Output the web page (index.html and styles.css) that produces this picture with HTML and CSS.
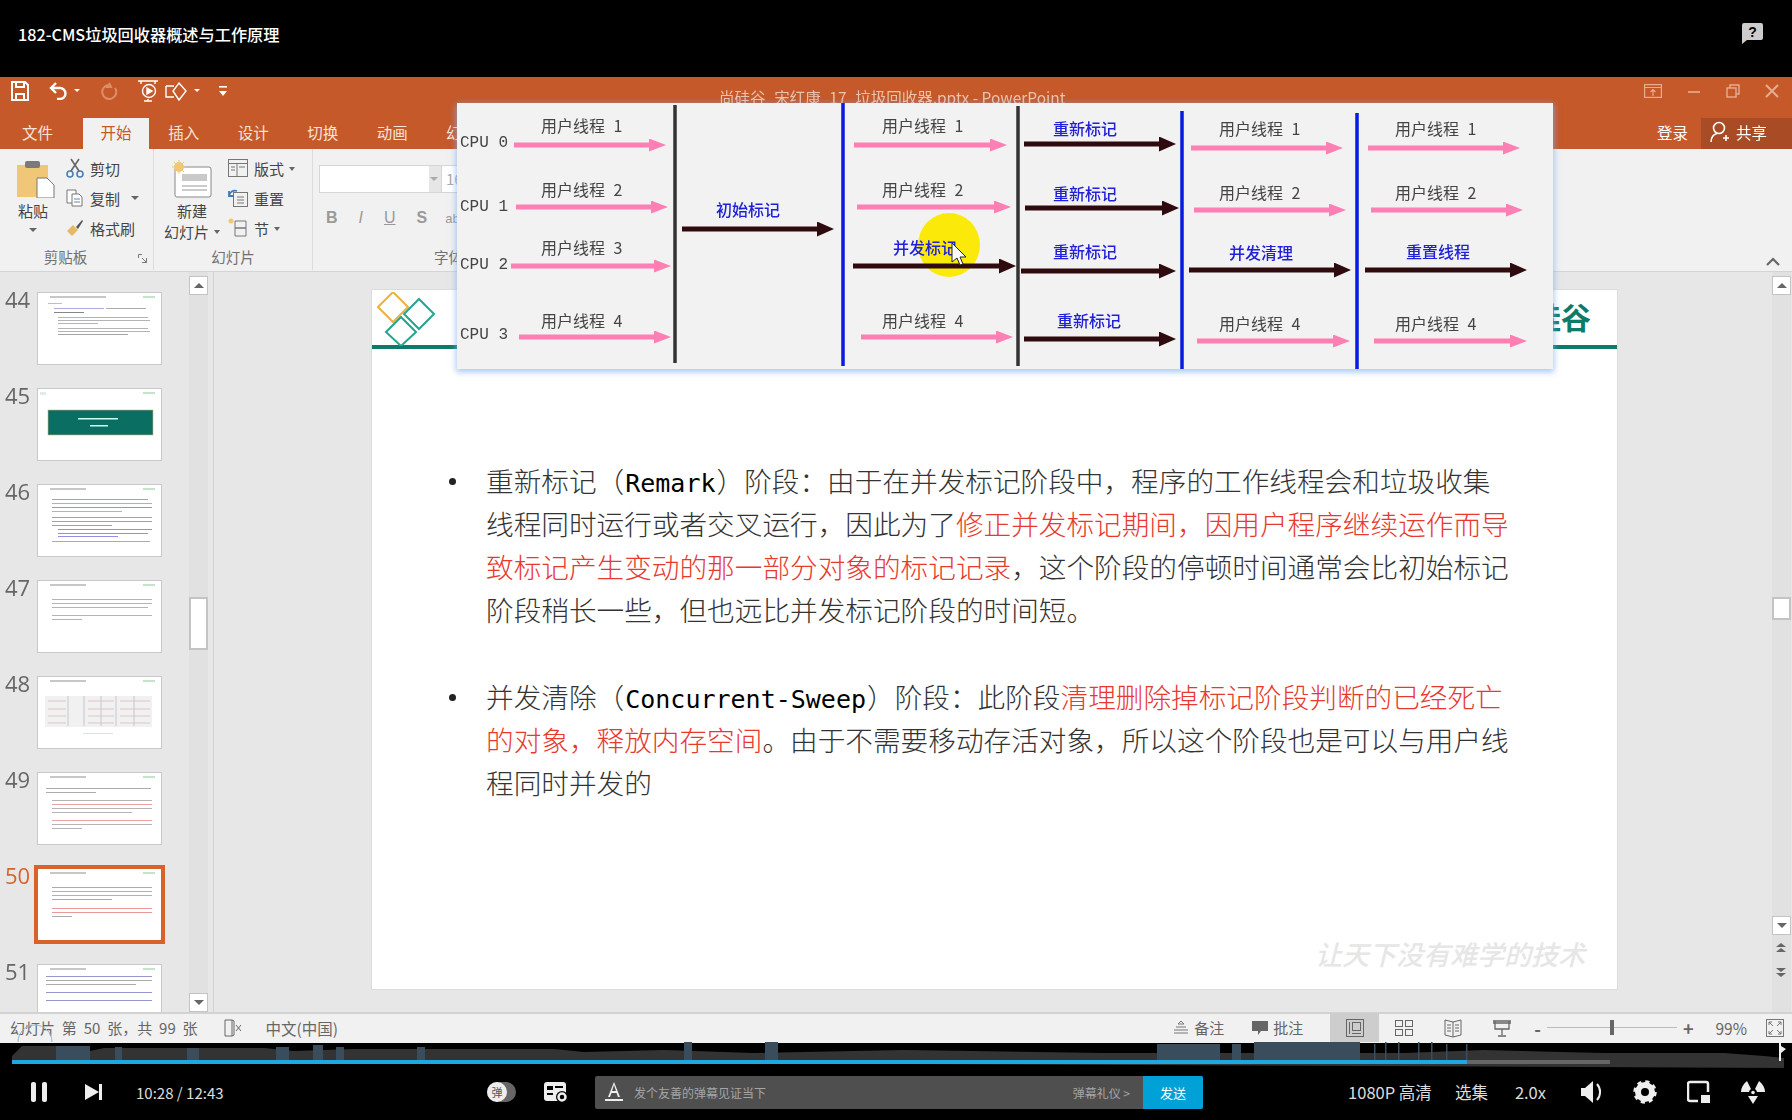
FILE: index.html
```html
<!DOCTYPE html>
<html lang="zh-CN">
<head>
    <meta charset="UTF-8">
    <title>182-CMS垃圾回收器概述与工作原理</title>
    <link rel="stylesheet" href="styles.css">
</head>
<body>
<div class="player">
    <header class="top-bar">
        <h1 class="video-title">182-CMS垃圾回收器概述与工作原理</h1>
        <svg class="help-icon" width="21" height="21" viewBox="0 0 21 21"><path d="M2 0h17a2 2 0 0 1 2 2v13a2 2 0 0 1-2 2H5l-5 4V2a2 2 0 0 1 2-2z" fill="#ccc"/><text x="10.500" y="14" class="help-mark">?</text></svg>
    </header>

    <main class="video">
        <div class="title-bar">
            <div class="quick-tools">
                <svg width="18" height="20" viewBox="0 0 18 20" fill="none" stroke="#fff" stroke-width="2"><path d="M1 1h13l3 3v15H1z"/><path d="M5 1v5h8V1M5 19v-6h8v6"/></svg>
                <svg class="tool-undo" width="20" height="18" viewBox="0 0 20 18" fill="none" stroke="#fff" stroke-width="2.400"><path d="M7 1L2 6l5 5M2 6h9a5 5 0 0 1 0 11H8"/></svg>
                <span class="caret-mini"></span>
                <svg class="tool-redo" width="18" height="18" viewBox="0 0 18 18" fill="none" stroke="#db8f68" stroke-width="2"><path d="M9 3a7 7 0 1 0 6 3M9 1l2 4-5 0"/></svg>
                <svg class="tool-show" width="22" height="24" viewBox="0 0 22 24" fill="none" stroke="#fff" stroke-width="1.400"><path d="M1 2h20M4 2v3M18 2v3M7 22h8M11 20v2"/><circle cx="12" cy="12" r="6.500"/><path d="M10 9l5 3-5 3z" fill="#fff"/></svg>
                <svg width="24" height="22" viewBox="0 0 24 22" fill="none" stroke="#fff" stroke-width="1.400"><path d="M1 6h8M1 6v11h8M14 3l7 8-7 9-6-9z"/></svg>
                <span class="caret-mini"></span>
                <svg class="tool-more" width="10" height="12" viewBox="0 0 10 12" fill="#fff"><rect x="1" y="1" width="8" height="1.600"/><path d="M1 6h8l-4 5z"/></svg>
            </div>
            <div class="doc-name">尚硅谷_宋红康_17_垃圾回收器.pptx - PowerPoint</div>
            <div class="window-btns">
                <svg width="18" height="14" viewBox="0 0 18 14" fill="none" stroke="#e6ad90" stroke-width="1.200"><rect x=".6" y=".6" width="16.800" height="12.800"/><path d="M.6 3.500h16.800M9 12V6M6.500 8L9 5.500 11.500 8"/></svg>
                <svg width="14" height="14" viewBox="0 0 14 14" stroke="#e6ad90" stroke-width="1.600"><path d="M1 8h12"/></svg>
                <svg width="14" height="14" viewBox="0 0 14 14" fill="none" stroke="#e6ad90" stroke-width="1.400"><rect x="1" y="4" width="9" height="9"/><path d="M4 4V1h9v9h-3"/></svg>
                <svg width="14" height="14" viewBox="0 0 14 14" stroke="#e6ad90" stroke-width="2"><path d="M1 1l12 12M13 1L1 13"/></svg>
            </div>
        </div>

        <nav class="tabs">
            <span class="tab tab-file">文件</span>
            <span class="tab tab-active">开始</span>
            <span class="tab">插入</span>
            <span class="tab">设计</span>
            <span class="tab">切换</span>
            <span class="tab">动画</span>
            <span class="tab tab-cut">幻</span>
            <div class="account">
                <span class="login">登录</span>
                <span class="share">
                    <svg width="20" height="22" viewBox="0 0 20 22" fill="none" stroke="#fff" stroke-width="1.600"><circle cx="9" cy="7" r="5.500"/><path d="M1 21c0-5 3-8 6-8.500M13 17h6M16 14v6"/></svg>
                    共享
                </span>
            </div>
        </nav>

        <section class="ribbon">
            <div class="group group-clip">
                <div class="group-body">
                    <div class="big-tool">
                        <svg class="paste-icon" width="38" height="38" viewBox="0 0 38 38"><rect x="0" y="5" width="31" height="32" fill="#efc777"/><rect x="8" y="1" width="15" height="7" rx="2" fill="#7a7a7a"/><path d="M20 18h10l7 7v13H20z" fill="#fff" stroke="#777"/></svg>
                        <span>粘贴</span>
                        <i class="caret"></i>
                    </div>
                    <div class="small-tools">
                        <div class="small-tool">
                            <svg width="18" height="20" viewBox="0 0 18 20" fill="none" stroke="#4a7fb5" stroke-width="1.600"><circle cx="4" cy="16" r="3"/><circle cx="14" cy="16" r="3"/><path d="M5 13L13 1M13 13L5 1" stroke="#666"/></svg>
                            <span>剪切</span>
                        </div>
                        <div class="small-tool">
                            <svg width="18" height="18" viewBox="0 0 18 18" fill="#fff" stroke="#777"><path d="M1 1h9v13H1z"/><path d="M6 5h7l3 3v9H6z"/><path d="M8 10h6M8 13h6" stroke="#5a8bbb"/></svg>
                            <span>复制</span>
                            <i class="caret caret-far"></i>
                        </div>
                        <div class="small-tool">
                            <svg width="18" height="18" viewBox="0 0 18 18"><path d="M1 12l6-6 5 5-6 6z" fill="#e6b968"/><path d="M10 8l6-7 1 1-5 8z" fill="#555"/></svg>
                            <span>格式刷</span>
                        </div>
                    </div>
                </div>
                <div class="group-label label-clip">剪贴板<svg class="launcher" width="9" height="9" viewBox="0 0 9 9" fill="none" stroke="#777"><path d="M.5 4V.5H4M8.500 8.500L4 4M8.500 4v4.500H4"/></svg></div>
            </div>
            <div class="group group-slides">
                <div class="group-body">
                    <div class="big-tool big-new">
                        <svg width="40" height="38" viewBox="0 0 40 38"><rect x="3" y="7" width="36" height="30" rx="2" fill="#fff" stroke="#888"/><rect x="10" y="14" width="25" height="7" fill="#c9c9c9"/><path d="M10 26h25M10 30h25" stroke="#999"/><circle cx="7" cy="7" r="5" fill="#efc777"/><path d="M7 0v14M0 7h14M2 2l10 10M12 2L2 12" stroke="#efc777"/></svg>
                        <span>新建</span>
                        <span>幻灯片<i class="caret caret-inline"></i></span>
                    </div>
                    <div class="small-tools">
                        <div class="small-tool">
                            <svg width="20" height="20" viewBox="0 0 20 20" fill="none" stroke="#777"><rect x=".5" y="1.500" width="19" height="17"/><path d="M.5 5.500h19M9 5.500v13M3 9h4M3 12h4M11 9h6"/></svg>
                            <span>版式<i class="caret caret-inline"></i></span>
                        </div>
                        <div class="small-tool">
                            <svg width="20" height="20" viewBox="0 0 20 20" fill="none" stroke="#777"><rect x="5.500" y="4.500" width="14" height="14"/><path d="M9 9h7M9 12h7M9 15h7"/><path d="M1 8a6 6 0 0 1 8-5M1 3v5h5" stroke="#3f7cb8" stroke-width="1.800"/></svg>
                            <span>重置</span>
                        </div>
                        <div class="small-tool">
                            <svg width="20" height="20" viewBox="0 0 20 20" fill="none" stroke="#777"><path d="M7 3h11v7H7zM7 10h11v8H7z"/><circle cx="3" cy="3" r="2.500" fill="#efc777" stroke="none"/></svg>
                            <span>节<i class="caret caret-inline"></i></span>
                        </div>
                    </div>
                </div>
                <div class="group-label">幻灯片</div>
            </div>
            <div class="group group-font">
                <div class="group-body font-body">
                    <div class="font-boxes">
                        <div class="font-name"><i class="caret caret-dim"></i></div>
                        <div class="font-size">16</div>
                    </div>
                    <div class="font-style">
                        <b>B</b><i>I</i><u>U</u><span class="strike">S</span><span class="abc">abc</span>
                    </div>
                </div>
                <div class="group-label label-font">字体</div>
            </div>
            <svg class="ribbon-collapse" width="14" height="9" viewBox="0 0 14 9" fill="none" stroke="#666" stroke-width="2.200"><path d="M1 8l6-6 6 6"/></svg>
        </section>

        <section class="workspace">
            <aside class="slide-list">
                <div class="thumbs">
                    <div class="thumb-row"><span class="num">44</span>
                        <svg class="thumb" viewBox="0 0 123 71"><rect x="12" y="3" width="56" height="2" fill="#999"/><rect x="105" y="3" width="12" height="2" fill="#9c9"/><rect x="10" y="10" width="14" height="1" fill="#888"/><rect x="16" y="15" width="50" height="1" fill="#66c"/><rect x="68" y="15" width="40" height="1" fill="#666"/><rect x="16" y="19" width="30" height="1" fill="#222"/><rect x="20" y="24" width="90" height="1" fill="#777"/><rect x="20" y="27" width="92" height="1" fill="#777"/><rect x="20" y="30" width="40" height="1" fill="#777"/><rect x="20" y="35" width="90" height="1" fill="#777"/><rect x="20" y="38" width="92" height="1" fill="#777"/><rect x="20" y="41" width="70" height="1" fill="#555"/></svg></div>
                    <div class="thumb-row"><span class="num">45</span>
                        <svg class="thumb" viewBox="0 0 123 71"><rect x="2" y="3" width="6" height="3" fill="#cdd"/><rect x="105" y="3" width="12" height="2" fill="#9c9"/><rect class="solid" x="10" y="21" width="105" height="25" fill="#0b6e62" stroke="#d8b27a" stroke-width=".6"/><rect class="solid" x="40" y="29" width="40" height="1.500" fill="#cfe"/><rect class="solid" x="52" y="36" width="18" height="1.500" fill="#cfe"/></svg></div>
                    <div class="thumb-row"><span class="num">46</span>
                        <svg class="thumb" viewBox="0 0 123 71"><rect x="12" y="3" width="36" height="2" fill="#999"/><rect x="105" y="3" width="12" height="2" fill="#9c9"/><rect x="14" y="14" width="96" height="1" fill="#558"/><rect x="14" y="18" width="100" height="1" fill="#66c"/><rect x="14" y="22" width="100" height="1" fill="#447"/><rect x="14" y="26" width="70" height="1" fill="#777"/><rect x="14" y="32" width="100" height="1" fill="#555"/><rect x="14" y="36" width="100" height="1" fill="#555"/><rect x="14" y="40" width="60" height="1" fill="#555"/><rect x="20" y="44" width="94" height="1" fill="#33c"/><rect x="20" y="48" width="90" height="1" fill="#33c"/><rect x="20" y="51" width="60" height="1" fill="#33c"/><rect x="14" y="56" width="98" height="1" fill="#666"/></svg></div>
                    <div class="thumb-row"><span class="num">47</span>
                        <svg class="thumb" viewBox="0 0 123 71"><rect x="12" y="3" width="36" height="2" fill="#999"/><rect x="105" y="3" width="12" height="2" fill="#9c9"/><rect x="14" y="18" width="100" height="1" fill="#777"/><rect x="14" y="22" width="100" height="1" fill="#777"/><rect x="14" y="26" width="96" height="1" fill="#777"/><rect x="14" y="34" width="100" height="1" fill="#777"/><rect x="14" y="38" width="30" height="1" fill="#777"/></svg></div>
                    <div class="thumb-row"><span class="num">48</span>
                        <svg class="thumb" viewBox="0 0 123 71"><rect x="12" y="3" width="36" height="2" fill="#999"/><rect x="105" y="3" width="12" height="2" fill="#9c9"/><rect class="solid" x="7" y="19" width="107" height="31" fill="#f1f1f1"/><path d="M30 19v30M46 19v30M63 19v30M78 19v30M96 19v30" stroke="#aab" stroke-width=".6"/><path d="M10 24h18M10 32h18M10 39h18M10 46h18M50 24h26M50 32h26M50 39h26M50 46h26M82 24h30M82 32h30M82 39h30M82 46h30" stroke="#dbb" stroke-width=".8"/><rect x="45" y="56" width="30" height=".8" fill="#bbb"/></svg></div>
                    <div class="thumb-row"><span class="num">49</span>
                        <svg class="thumb" viewBox="0 0 123 71"><rect x="12" y="3" width="36" height="2" fill="#999"/><rect x="105" y="3" width="12" height="2" fill="#9c9"/><rect x="8" y="15" width="105" height="1" fill="#666"/><rect x="8" y="19" width="50" height="1" fill="#666"/><rect x="14" y="27" width="100" height="1" fill="#777"/><rect x="14" y="31" width="100" height="1" fill="#d55"/><rect x="14" y="35" width="100" height="1" fill="#777"/><rect x="14" y="39" width="80" height="1" fill="#777"/><rect x="14" y="47" width="100" height="1" fill="#d55"/><rect x="14" y="51" width="100" height="1" fill="#777"/><rect x="14" y="55" width="30" height="1" fill="#777"/></svg></div>
                    <div class="thumb-row thumb-active"><span class="num">50</span>
                        <svg class="thumb" viewBox="0 0 123 71"><rect x="12" y="3" width="36" height="2" fill="#999"/><rect x="105" y="3" width="12" height="2" fill="#9c9"/><rect x="14" y="18" width="100" height="1" fill="#666"/><rect x="14" y="22" width="100" height="1" fill="#d44"/><rect x="14" y="26" width="100" height="1" fill="#d44"/><rect x="14" y="30" width="60" height="1" fill="#666"/><rect x="14" y="39" width="100" height="1" fill="#d44"/><rect x="14" y="43" width="100" height="1" fill="#d44"/><rect x="14" y="47" width="20" height="1" fill="#666"/></svg></div>
                    <div class="thumb-row"><span class="num">51</span>
                        <svg class="thumb" viewBox="0 0 123 71"><rect x="12" y="3" width="36" height="2" fill="#999"/><rect x="105" y="3" width="12" height="2" fill="#9c9"/><rect x="8" y="11" width="106" height="1" fill="#44a"/><rect x="8" y="15" width="106" height="1" fill="#666"/><rect x="8" y="19" width="90" height="1" fill="#666"/><rect x="8" y="27" width="106" height="1" fill="#44a"/><rect x="8" y="35" width="106" height="1" fill="#44a"/></svg></div>
                </div>
                <div class="list-scroll">
                    <button class="scroll-btn"><i class="tri-up"></i></button>
                    <div class="scroll-track"><div class="scroll-thumb"></div></div>
                    <button class="scroll-btn"><i class="tri-down"></i></button>
                </div>
            </aside>

            <div class="stage">
                <article class="slide">
                    <div class="slide-head">
                        <svg class="logo" width="60" height="54" viewBox="0 0 60 54" fill="none" stroke-width="2"><path d="M16 0l15 15-15 15L1 15z" stroke="#f0b040"/><path d="M42 7l15 15-15 15-15-15z" stroke="#23a58e"/><path d="M24 25l15 15-15 14-15-14z" stroke="#23a58e"/></svg>
                        <span class="brand">尚硅谷</span>
                    </div>
                    <div class="slide-body">
                        <div class="bullet">
                            <p>重新标记（<span class="latin">Remark</span>）阶段：由于在并发标记阶段中，程序的工作线程会和垃圾收集</p>
                            <p>线程同时运行或者交叉运行，因此为了<em>修正并发标记期间，因用户程序继续运作而导</em></p>
                            <p><em>致标记产生变动的那一部分对象的标记记录</em>，这个阶段的停顿时间通常会比初始标记</p>
                            <p>阶段稍长一些，但也远比并发标记阶段的时间短。</p>
                        </div>
                        <div class="bullet">
                            <p>并发清除（<span class="latin">Concurrent-Sweep</span>）阶段：此阶段<em>清理删除掉标记阶段判断的已经死亡</em></p>
                            <p><em>的对象，释放内存空间</em>。由于不需要移动存活对象，所以这个阶段也是可以与用户线</p>
                            <p>程同时并发的</p>
                        </div>
                    </div>
                    <div class="watermark">让天下没有难学的技术</div>
                </article>
                <div class="stage-scroll">
                    <button class="scroll-btn"><i class="tri-up"></i></button>
                    <div class="scroll-track"><div class="scroll-thumb stage-thumb"></div></div>
                    <button class="scroll-btn"><i class="tri-down"></i></button>
                    <svg class="page-jump" width="10" height="10" viewBox="0 0 10 10" fill="#666"><path d="M5 0l5 4H0zM5 5l5 4H0z"/></svg>
                    <svg class="page-jump" width="10" height="10" viewBox="0 0 10 10" fill="#666"><path d="M5 5L0 1h10zM5 10L0 6h10z"/></svg>
                </div>
            </div>
        </section>

        <footer class="status-bar">
            <span class="status-count">幻灯片 第 50 张，共 99 张</span>
            <svg class="status-book" width="18" height="20" viewBox="0 0 18 20" fill="none" stroke="#666"><path d="M1 2h7v16H1zM8 2l2 1v14l-2 1M12 7l5 6M17 7l-5 6"/></svg>
            <span class="status-lang">中文(中国)</span>
            <div class="status-right">
                <span class="status-item item-notes"><svg width="16" height="16" viewBox="0 0 16 16" fill="none" stroke="#777"><path d="M1 10h14M1 13h14M3 7h10M8 1L5 4h6z"/></svg>备注</span>
                <span class="status-item"><svg width="16" height="16" viewBox="0 0 16 16" fill="#666"><path d="M0 1h16v10H9l-3 4v-4H0z"/></svg>批注</span>
                <span class="view-btn view-on"><svg width="20" height="20" viewBox="0 0 20 20" fill="none" stroke="#666"><rect x="1.500" y="1.500" width="17" height="17"/><rect x="7.500" y="4.500" width="8" height="8"/><path d="M4.500 4v12M7 15.500h9"/></svg></span>
                <span class="view-btn"><svg width="20" height="20" viewBox="0 0 20 20" fill="none" stroke="#666"><rect x="1.500" y="2.500" width="7" height="6"/><rect x="11.500" y="2.500" width="7" height="6"/><rect x="1.500" y="11.500" width="7" height="6"/><rect x="11.500" y="11.500" width="7" height="6"/></svg></span>
                <span class="view-btn"><svg width="20" height="20" viewBox="0 0 20 20" fill="none" stroke="#666"><path d="M2 2l8 2 8-2v15l-8 2-8-2zM10 4v15M4 7h4M4 10h4M4 13h4M12 7h4M12 10h4M12 13h4"/></svg></span>
                <span class="view-btn"><svg width="20" height="20" viewBox="0 0 20 20" fill="none" stroke="#666" stroke-width="1.300"><path d="M1 3h18M3 3v8h14V3M1 5h18M10 11v6M6 18h8"/></svg></span>
                <span class="zoom-minus">-</span>
                <span class="zoom-slider"><i></i></span>
                <span class="zoom-plus">+</span>
                <span class="zoom-value">99%</span>
                <svg width="18" height="18" viewBox="0 0 18 18" fill="none" stroke="#777"><rect x=".5" y=".5" width="17" height="17"/><path d="M3 6V3h3M15 6V3h-3M3 12v3h3M15 12v3h-3M3 3l4 4M15 3l-4 4M3 15l4-4M15 15l-4-4"/></svg>
            </div>
        </footer>

        <!-- picture pasted over the ribbon and the slide in the recording -->
        <div class="overlay">
            <svg width="1096" height="266" viewBox="0 0 1096 266">
                <defs>
                    <marker id="head-pink" markerWidth="3.400" markerHeight="2.600" refX="0" refY="1.300" orient="auto"><path d="M0 0l3.400 1.300-3.400 1.300z" fill="#fd7fb3"/></marker>
                    <marker id="head-dark" markerWidth="3.400" markerHeight="3" refX="0" refY="1.500" orient="auto"><path d="M0 0l3.400 1.500-3.400 1.500z" fill="#2f0a0e"/></marker>
                </defs>
                <g class="bars">
                    <path class="bar-black" d="M218 2v258M561 3v260"/>
                    <path class="bar-blue" d="M386 0v263M725 8v258M900 10v256"/>
                </g>
                <g class="pink">
                    <line x1="57" y1="42" x2="192" y2="42"/>
                    <line x1="59" y1="104" x2="194" y2="104"/>
                    <line x1="54" y1="163" x2="197" y2="163"/>
                    <line x1="62" y1="234" x2="197" y2="234"/>
                    <line x1="397" y1="42" x2="533" y2="42"/>
                    <line x1="400" y1="104" x2="537" y2="104"/>
                    <line x1="404" y1="234" x2="539" y2="234"/>
                    <line x1="734" y1="45" x2="869" y2="45"/>
                    <line x1="737" y1="107" x2="872" y2="107"/>
                    <line x1="740" y1="238" x2="876" y2="238"/>
                    <line x1="911" y1="45" x2="1046" y2="45"/>
                    <line x1="914" y1="107" x2="1049" y2="107"/>
                    <line x1="917" y1="238" x2="1053" y2="238"/>
                </g>
                <ellipse cx="492" cy="142" rx="31" ry="32" fill="#fbe90a"/>
                <g class="dark">
                    <line x1="225" y1="126" x2="360" y2="126"/>
                    <line x1="396" y1="163" x2="542" y2="163"/>
                    <line x1="567" y1="41" x2="702" y2="41"/>
                    <line x1="568" y1="105" x2="705" y2="105"/>
                    <line x1="564" y1="168" x2="702" y2="168"/>
                    <line x1="567" y1="236" x2="702" y2="236"/>
                    <line x1="732" y1="167" x2="877" y2="167"/>
                    <line x1="908" y1="167" x2="1053" y2="167"/>
                </g>
                <g class="cpu">
                    <text x="3" y="44">CPU 0</text>
                    <text x="3" y="108">CPU 1</text>
                    <text x="3" y="166">CPU 2</text>
                    <text x="3" y="236">CPU 3</text>
                </g>
                <g class="thread">
                    <text x="84" y="29">用户线程 1</text>
                    <text x="84" y="93">用户线程 2</text>
                    <text x="84" y="151">用户线程 3</text>
                    <text x="84" y="224">用户线程 4</text>
                    <text x="425" y="29">用户线程 1</text>
                    <text x="425" y="93">用户线程 2</text>
                    <text x="425" y="224">用户线程 4</text>
                    <text x="762" y="32">用户线程 1</text>
                    <text x="762" y="96">用户线程 2</text>
                    <text x="762" y="227">用户线程 4</text>
                    <text x="938" y="32">用户线程 1</text>
                    <text x="938" y="96">用户线程 2</text>
                    <text x="938" y="227">用户线程 4</text>
                </g>
                <g class="stage-name">
                    <text x="291" y="113">初始标记</text>
                    <text x="468" y="151">并发标记</text>
                    <text x="628" y="32">重新标记</text>
                    <text x="628" y="97">重新标记</text>
                    <text x="628" y="155">重新标记</text>
                    <text x="632" y="224">重新标记</text>
                    <text x="804" y="156">并发清理</text>
                    <text x="981" y="155">重置线程</text>
                </g>
                <path class="cursor" d="M495 140v19l5-4 3 7 3-1-3-7h6z"/>
            </svg>
        </div>
    </main>

    <div class="timeline">
        <svg width="1792" height="22" viewBox="0 0 1792 22">
            <path d="M12 18V14L22 4h38l12 5 18 0 14-3h160l30 3 60-2h200l30 3 80-2 90 3 150-3 200 3h300l80-3 120 3h120l40 3 20 2v10z" fill="#333"/>
            <g fill="#3a4d5c">
                <rect x="56" y="4" width="34" height="14"/><rect x="115" y="5" width="7" height="13"/><rect x="187" y="6" width="12" height="12"/><rect x="276" y="5" width="13" height="13"/><rect x="313" y="3" width="10" height="15"/><rect x="336" y="5" width="8" height="13"/><rect x="417" y="5" width="8" height="13"/><rect x="684" y="0" width="8" height="18"/><rect x="765" y="0" width="13" height="18"/><rect x="1157" y="2" width="63" height="16"/><rect x="1232" y="2" width="9" height="16"/><rect x="1254" y="0" width="106" height="18"/><rect x="1374" y="2" width="1.500" height="16"/><rect x="1385" y="0" width="1.500" height="18"/><rect x="1398" y="0" width="1.500" height="18"/><rect x="1418" y="0" width="1.500" height="18"/><rect x="1431" y="0" width="1.500" height="18"/><rect x="1446" y="2" width="1.500" height="16"/><rect x="1466" y="2" width="1.500" height="16"/>
            </g>
            <path class="scrub-arc" d="M18 0a17 17 0 0 1 34 0"/>
            <rect x="12" y="18" width="1455" height="4" fill="#1fa8e0"/>
            <rect x="1467" y="18" width="143" height="4" fill="#666"/>
            <rect x="1610" y="18" width="170" height="4" fill="#333"/>
            <path d="M1779 0h2v19h-2zM1781 4l5 3-5 4z" fill="#eee"/>
        </svg>
    </div>

    <div class="controls">
        <svg class="pause" width="16" height="20" viewBox="0 0 16 20" fill="#eee"><rect x="0" y="0" width="5" height="20" rx="2"/><rect x="11" y="0" width="5" height="20" rx="2"/></svg>
        <svg class="next" width="17" height="16" viewBox="0 0 17 16" fill="#eee"><path d="M0 0l14 8-14 8z"/><rect x="14" y="0" width="3" height="16"/></svg>
        <span class="time">10:28 / 12:43</span>
        <span class="danmu-toggle"><b>弹</b></span>
        <svg class="danmu-set" width="24" height="21" viewBox="0 0 24 21"><rect x="0" y="0" width="22" height="19" rx="3" fill="#eee"/><rect x="3" y="4" width="6" height="4" fill="#000"/><rect x="11" y="4" width="8" height="2" fill="#000"/><rect x="3" y="11" width="6" height="2" fill="#000"/><circle cx="18" cy="15" r="6" fill="#000"/><circle cx="18" cy="15" r="3.500" fill="none" stroke="#eee" stroke-width="2.500"/></svg>
        <div class="danmu-box">
            <svg width="18" height="22" viewBox="0 0 18 22" fill="#eee"><path d="M9 1L3 16h2l1.500-4h5L13 16h2zM7 10l2-6 2 6z"/><rect x="0" y="18" width="18" height="2"/></svg>
            <span class="danmu-hint">发个友善的弹幕见证当下</span>
            <span class="danmu-rules">弹幕礼仪 &gt;</span>
            <span class="danmu-send">发送</span>
        </div>
        <div class="controls-right">
            <span class="quality">1080P 高清</span>
            <span>选集</span>
            <span class="speed">2.0x</span>
            <svg width="22" height="24" viewBox="0 0 22 24" fill="#eee"><path d="M0 8h4l8-7v22l-8-7H0z"/><path d="M16 4a12 12 0 0 1 0 16" fill="none" stroke="#eee" stroke-width="2"/></svg>
            <svg width="24" height="24" viewBox="0 0 24 24" fill="none" stroke="#eee"><circle cx="12" cy="12" r="7" stroke-width="6"/><circle cx="12" cy="12" r="10" stroke-width="3.500" stroke-dasharray="4 3.850"/></svg>
            <svg width="24" height="24" viewBox="0 0 24 24" fill="none" stroke="#eee" stroke-width="2.500"><path d="M11 21H3a2 2 0 0 1-2-2V4a2 2 0 0 1 2-2h16a2 2 0 0 1 2 2v8"/><rect x="14" y="15" width="9" height="8" fill="#eee" stroke="none"/></svg>
            <svg width="24" height="24" viewBox="0 0 24 24" fill="#eee"><path d="M6 1l4 8a5 5 0 0 0-2 3H0C0 8 2 4 6 1zM18 1c4 3 6 7 6 11h-8a5 5 0 0 0-2-3zM7 16h10l-5 8z"/><circle cx="12" cy="12.500" r="1.800"/></svg>
        </div>
    </div>
</div>
</body>
</html>
```

FILE: styles.css
```css
* {
    box-sizing: border-box;
}
html, body {
    margin: 0;
    padding: 0;
    background-color: #000;
    overflow: hidden;
}
body {
    font-family: "Noto Sans CJK SC", "Noto Sans", sans-serif;
}
.player {
    width: 1792px;
    height: 1120px;
    display: flex;
    flex-direction: column;
}
.top-bar {
    height: 77px;
    flex: none;
    display: flex;
    align-items: center;
    justify-content: space-between;
    padding: 0 29px 10px 18px;
    background-color: #000;
}
.video-title {
    margin: 0;
    font-size: 16.200px;
    font-weight: 500;
    color: #fff;
}
.help-mark {
    font-family: "Liberation Sans", sans-serif;
    font-size: 14px;
    font-weight: 700;
    fill: #000;
    text-anchor: middle;
}

/* everything below is the recording, so it is a little soft */
.video {
    position: relative;
    flex: none;
    height: 966px;
    display: flex;
    flex-direction: column;
    overflow: hidden;
    filter: blur(0.45px);
}
.title-bar {
    height: 41px;
    flex: none;
    display: flex;
    align-items: center;
    position: relative;
    padding-bottom: 14px;
    background-color: #c5592a;
}
.quick-tools {
    display: flex;
    align-items: center;
    gap: 6px;
    padding-left: 11px;
}
.caret-mini {
    width: 0;
    height: 0;
    border-left: 3px solid transparent;
    border-right: 3px solid transparent;
    border-top: 3px solid #fff;
    margin-left: -1px;
}
.tool-undo {
    margin-left: 14px;
}
.tool-redo {
    margin-left: 14px;
}
.tool-show {
    margin-left: 13px;
}
.tool-more {
    margin-left: 12px;
}
.doc-name {
    position: absolute;
    left: 719px;
    top: 9px;
    font-size: 15.500px;
    color: #ecc3ad;
}
.window-btns {
    margin-left: auto;
    display: flex;
    align-items: center;
    gap: 25px;
    padding-right: 13px;
}
.tabs {
    height: 31px;
    flex: none;
    display: flex;
    align-items: stretch;
    background-color: #c5592a;
}
.tab {
    width: 69.500px;
    flex: none;
    display: flex;
    align-items: center;
    justify-content: center;
    padding-bottom: 4px;
    font-size: 15.500px;
    color: #f7e3d8;
    white-space: nowrap;
}
.tab-file {
    width: 83px;
    padding-right: 8px;
}
.tab-active {
    width: 66px;
    background-color: #f1f1f1;
    color: #c5592a;
}
.tab-cut {
    justify-content: flex-start;
    padding-left: 19px;
}
.account {
    margin-left: auto;
    display: flex;
    align-items: center;
    padding-bottom: 4px;
}
.login {
    font-size: 15.500px;
    color: #fff;
    margin-right: 13px;
}
.share {
    width: 91px;
    height: 31px;
    display: flex;
    align-items: center;
    gap: 6px;
    padding-left: 9px;
    margin-bottom: -4px;
    padding-bottom: 4px;
    font-size: 15.500px;
    color: #fff;
    background-color: #a94c25;
}

.ribbon {
    height: 123px;
    flex: none;
    position: relative;
    display: flex;
    background-color: #f1f1f1;
    border-bottom: 1px solid #d4d4d4;
}
.group {
    display: flex;
    flex-direction: column;
    padding-top: 9px;
    margin-bottom: 1px;
    border-right: 1px solid #dcdcdc;
}
.group-clip {
    width: 154px;
}
.group-slides {
    width: 159px;
}
.group-font {
    width: 300px;
    border-right: none;
}
.group-body {
    flex: 1;
    display: flex;
}
.group-label {
    height: 24px;
    position: relative;
    text-align: center;
    font-size: 14.500px;
    color: #707070;
}
.label-clip {
    padding-right: 22px;
}
.label-font {
    text-align: left;
    padding-left: 121px;
}
.launcher {
    position: absolute;
    left: 138px;
    top: 8px;
}
.big-tool {
    width: 66px;
    flex: none;
    display: flex;
    flex-direction: column;
    align-items: center;
    font-size: 15px;
    line-height: 21px;
    color: #444;
    padding-top: 2px;
}
.big-tool svg {
    margin-bottom: 2px;
}
.big-tool .paste-icon {
    margin-left: 5px;
}
.big-new {
    width: 72px;
    margin-left: 2px;
}
.small-tools {
    display: flex;
    flex-direction: column;
    gap: 10px;
}
.small-tool {
    height: 20px;
    display: flex;
    align-items: center;
    gap: 6px;
    font-size: 15px;
    color: #444;
    white-space: nowrap;
}
.caret {
    display: inline-block;
    width: 0;
    height: 0;
    border-left: 4px solid transparent;
    border-right: 4px solid transparent;
    border-top: 4px solid #666;
    margin-top: 7px;
}
.caret-far {
    margin: 0 0 0 5px;
}
.caret-inline {
    margin: 0 0 3px 5px;
    border-width: 4px 3.500px 0;
    vertical-align: middle;
}
.caret-dim {
    border-top-color: #aaa;
    margin: 0;
}
.font-body {
    flex-direction: column;
    padding: 7px 0 0 6px;
    gap: 16px;
}
.font-boxes {
    display: flex;
    height: 28px;
}
.font-name {
    width: 123px;
    display: flex;
    align-items: center;
    justify-content: flex-end;
    padding-right: 3px;
    background: linear-gradient(90deg, #fff 109px, #e6e6e6 109px);
    border: 1px solid #d6d6d6;
}
.font-size {
    width: 44px;
    padding-left: 4px;
    font-size: 15px;
    line-height: 26px;
    color: #aaa;
    background-color: #fff;
    border: 1px solid #d6d6d6;
    border-left: none;
}
.font-style {
    display: flex;
    align-items: baseline;
    gap: 21px;
    padding-left: 7px;
    font-family: "Liberation Sans", sans-serif;
    font-size: 16px;
    color: #9a9a9a;
}
.font-style .abc {
    font-size: 13px;
    margin-left: -3px;
}
.strike {
    font-weight: 700;
}
.ribbon-collapse {
    position: absolute;
    left: 1766px;
    top: 108px;
}

.workspace {
    flex: 1;
    min-height: 0;
    display: flex;
    background-color: #e7e7e7;
}
.slide-list {
    width: 214px;
    flex: none;
    display: flex;
    border-right: 1px solid #d2d2d2;
}
.thumbs {
    width: 189px;
    flex: none;
    display: flex;
    flex-direction: column;
    gap: 25px;
    padding: 21px 0 0 5px;
    overflow: hidden;
}
.thumb-row {
    height: 71px;
    flex: none;
    display: flex;
    align-items: flex-start;
}
.num {
    width: 33px;
    flex: none;
    margin-top: -9px;
    font-family: "Open Sans", sans-serif;
    font-size: 22px;
    color: #666;
}
.thumb {
    width: 123px;
    height: 71px;
    flex: none;
    background-color: #fff;
    outline: 1px solid #c9c9c9;
}
.thumb rect {
    opacity: 0.55;
}
.thumb .solid {
    opacity: 1;
}
.thumb-active .num {
    color: #d9622b;
}
.thumb-active .thumb {
    outline: 4px solid #d9622b;
    outline-offset: 0;
}
.list-scroll, .stage-scroll {
    width: 19px;
    flex: none;
    display: flex;
    flex-direction: column;
    padding-top: 4px;
    background-color: #e1e1e1;
}
.list-scroll {
    margin-right: 5px;
}
.scroll-btn {
    width: 19px;
    height: 19px;
    flex: none;
    padding: 0;
    display: flex;
    align-items: center;
    justify-content: center;
    background-color: #fff;
    border: 1px solid #c4c4c4;
}
.tri-up, .tri-down {
    width: 0;
    height: 0;
    border-left: 5px solid transparent;
    border-right: 5px solid transparent;
}
.tri-up {
    border-bottom: 5px solid #666;
}
.tri-down {
    border-top: 5px solid #666;
}
.scroll-track {
    flex: 1;
    padding-top: 302px;
}
.scroll-thumb {
    height: 53px;
    background-color: #fff;
    border: 2px solid #c4c4c4;
}
.stage {
    flex: 1;
    min-width: 0;
    display: flex;
    justify-content: space-between;
    padding-left: 157px;
}
.slide {
    position: relative;
    width: 1247px;
    height: 701px;
    margin-top: 17px;
    background-color: #fff;
    border: 1px solid #dcdcdc;
}
.slide-head {
    height: 59px;
    display: flex;
    align-items: flex-start;
    justify-content: space-between;
    padding: 2px 26px 0 5px;
    border-bottom: 4px solid #0d7a6a;
}
.brand {
    margin-top: 2px;
    font-family: "Noto Sans CJK SC", serif;
    font-size: 30px;
    font-weight: 700;
    color: #0d7a6a;
}
.slide-body {
    padding: 110px 0 0 114px;
    display: flex;
    flex-direction: column;
    gap: 44px;
}
.bullet {
    position: relative;
    font-size: 27.650px;
    font-weight: 300;
    color: #333;
    white-space: nowrap;
}
.bullet::before {
    content: "";
    position: absolute;
    left: -37px;
    top: 19px;
    width: 7px;
    height: 7px;
    border-radius: 50%;
    background-color: #222;
}
.bullet p {
    height: 43px;
    margin: 0;
    line-height: 43px;
}
.bullet em {
    font-style: normal;
    color: #e8392f;
}
.latin {
    padding: 0 1px;
    font-family: "DejaVu Sans Mono", monospace;
    font-size: 25px;
    line-height: 1;
    color: #000;
}
.watermark {
    position: absolute;
    right: 32px;
    bottom: 16px;
    font-size: 27px;
    font-style: italic;
    font-weight: 500;
    color: #e6e6e6;
}
.stage-scroll {
    position: relative;
    margin-right: 1px;
    padding-bottom: 29px;
}
.stage-thumb {
    height: 23px;
}
.page-jump {
    flex: none;
    margin: 8px 0 6px 4px;
}

.status-bar {
    height: 31px;
    flex: none;
    display: flex;
    align-items: center;
    padding-left: 10px;
    padding-bottom: 2px;
    font-size: 15px;
    color: #666;
    background-color: #f1f1f1;
    border-top: 2px solid #d2d2d2;
}
.status-count {
    word-spacing: 3.500px;
}
.status-lang {
    font-size: 15.500px;
}
.status-book {
    margin: 0 24px 0 26px;
}
.status-right {
    margin-left: auto;
    display: flex;
    align-items: center;
    height: 31px;
    margin-bottom: -2px;
    padding-bottom: 2px;
    padding-right: 8px;
}
.status-item {
    display: flex;
    align-items: center;
    gap: 5px;
    margin-right: 27px;
}
.item-notes {
    margin-right: 28px;
}
.view-btn {
    width: 49px;
    height: 29px;
    display: flex;
    align-items: center;
    justify-content: center;
}
.view-on {
    background-color: #cdcdcd;
}
.zoom-minus, .zoom-plus {
    font-size: 18px;
    font-weight: 700;
    line-height: 1;
}
.zoom-minus {
    margin-left: 8px;
}
.zoom-slider {
    position: relative;
    width: 130px;
    height: 1px;
    margin: 0 6px;
    background-color: #bbb;
}
.zoom-slider i {
    position: absolute;
    left: 63px;
    top: -7px;
    width: 4px;
    height: 15px;
    background-color: #666;
}
.zoom-value {
    margin: 0 19px 0 22px;
    font-size: 15.500px;
}

.overlay {
    position: absolute;
    left: 457px;
    top: 26px;
    width: 1096px;
    height: 266px;
    background-color: #f2f2f2;
    box-shadow: 0 2px 6px 1px rgba(130, 175, 240, 0.7);
}
.overlay svg {
    display: block;
}
.bars path {
    fill: none;
    stroke-width: 3.500px;
}
.bar-black {
    stroke: #333;
}
.bar-blue {
    stroke: #0a1ae0;
}
.pink line {
    stroke: #fd7fb3;
    stroke-width: 5px;
    marker-end: url(#head-pink);
}
.dark line {
    stroke: #2f0a0e;
    stroke-width: 5px;
    marker-end: url(#head-dark);
}
.cpu text {
    font-family: "Liberation Mono", monospace;
    font-size: 16px;
    fill: #444;
}
.thread text {
    font-size: 16px;
    word-spacing: 5px;
    fill: #444;
}
.stage-name text {
    font-size: 16px;
    font-weight: 500;
    text-anchor: middle;
    fill: #2020d8;
}
.cursor {
    fill: #fff;
    stroke: #222;
    stroke-width: 1px;
}

.timeline {
    position: relative;
    height: 22px;
    flex: none;
    margin-top: -1px;
}
.timeline svg {
    display: block;
    overflow: visible;
}
.scrub-arc {
    fill: none;
    stroke: #8db3d3;
    stroke-width: 1px;
}
.controls {
    flex: 1;
    display: flex;
    align-items: center;
    padding-left: 31px;
    color: #ddd;
    background-color: #000;
}
.next {
    margin-left: 38px;
}
.time {
    width: 351px;
    margin-left: 34px;
    font-size: 15px;
    white-space: nowrap;
}
.danmu-toggle {
    width: 29px;
    height: 20px;
    display: flex;
    border-radius: 10px;
    background-color: #666;
}
.danmu-toggle b {
    width: 20px;
    height: 20px;
    border-radius: 50%;
    font-size: 11px;
    font-weight: 400;
    line-height: 20px;
    text-align: center;
    color: #555;
    background-color: #eee;
}
.danmu-set {
    margin-left: 28px;
}
.danmu-box {
    width: 608px;
    height: 33px;
    margin-left: 27px;
    display: flex;
    align-items: center;
    padding-left: 10px;
    border-radius: 2px;
    background-color: #4f4f4f;
}
.danmu-hint {
    margin-left: 11px;
    font-size: 12px;
    color: #a5a5a5;
}
.danmu-rules {
    margin-left: auto;
    margin-right: 13px;
    font-size: 12px;
    color: #a5a5a5;
}
.danmu-send {
    width: 60px;
    height: 100%;
    font-size: 13px;
    line-height: 33px;
    text-align: center;
    color: #fff;
    border-radius: 0 2px 2px 0;
    background-color: #00a1d6;
}
.controls-right {
    margin-left: auto;
    display: flex;
    align-items: center;
    gap: 30px;
    padding-right: 27px;
    font-size: 16.500px;
    white-space: nowrap;
}
.quality {
    margin-right: -7px;
}
.speed {
    margin: 0 5px 0 -3px;
}
```
